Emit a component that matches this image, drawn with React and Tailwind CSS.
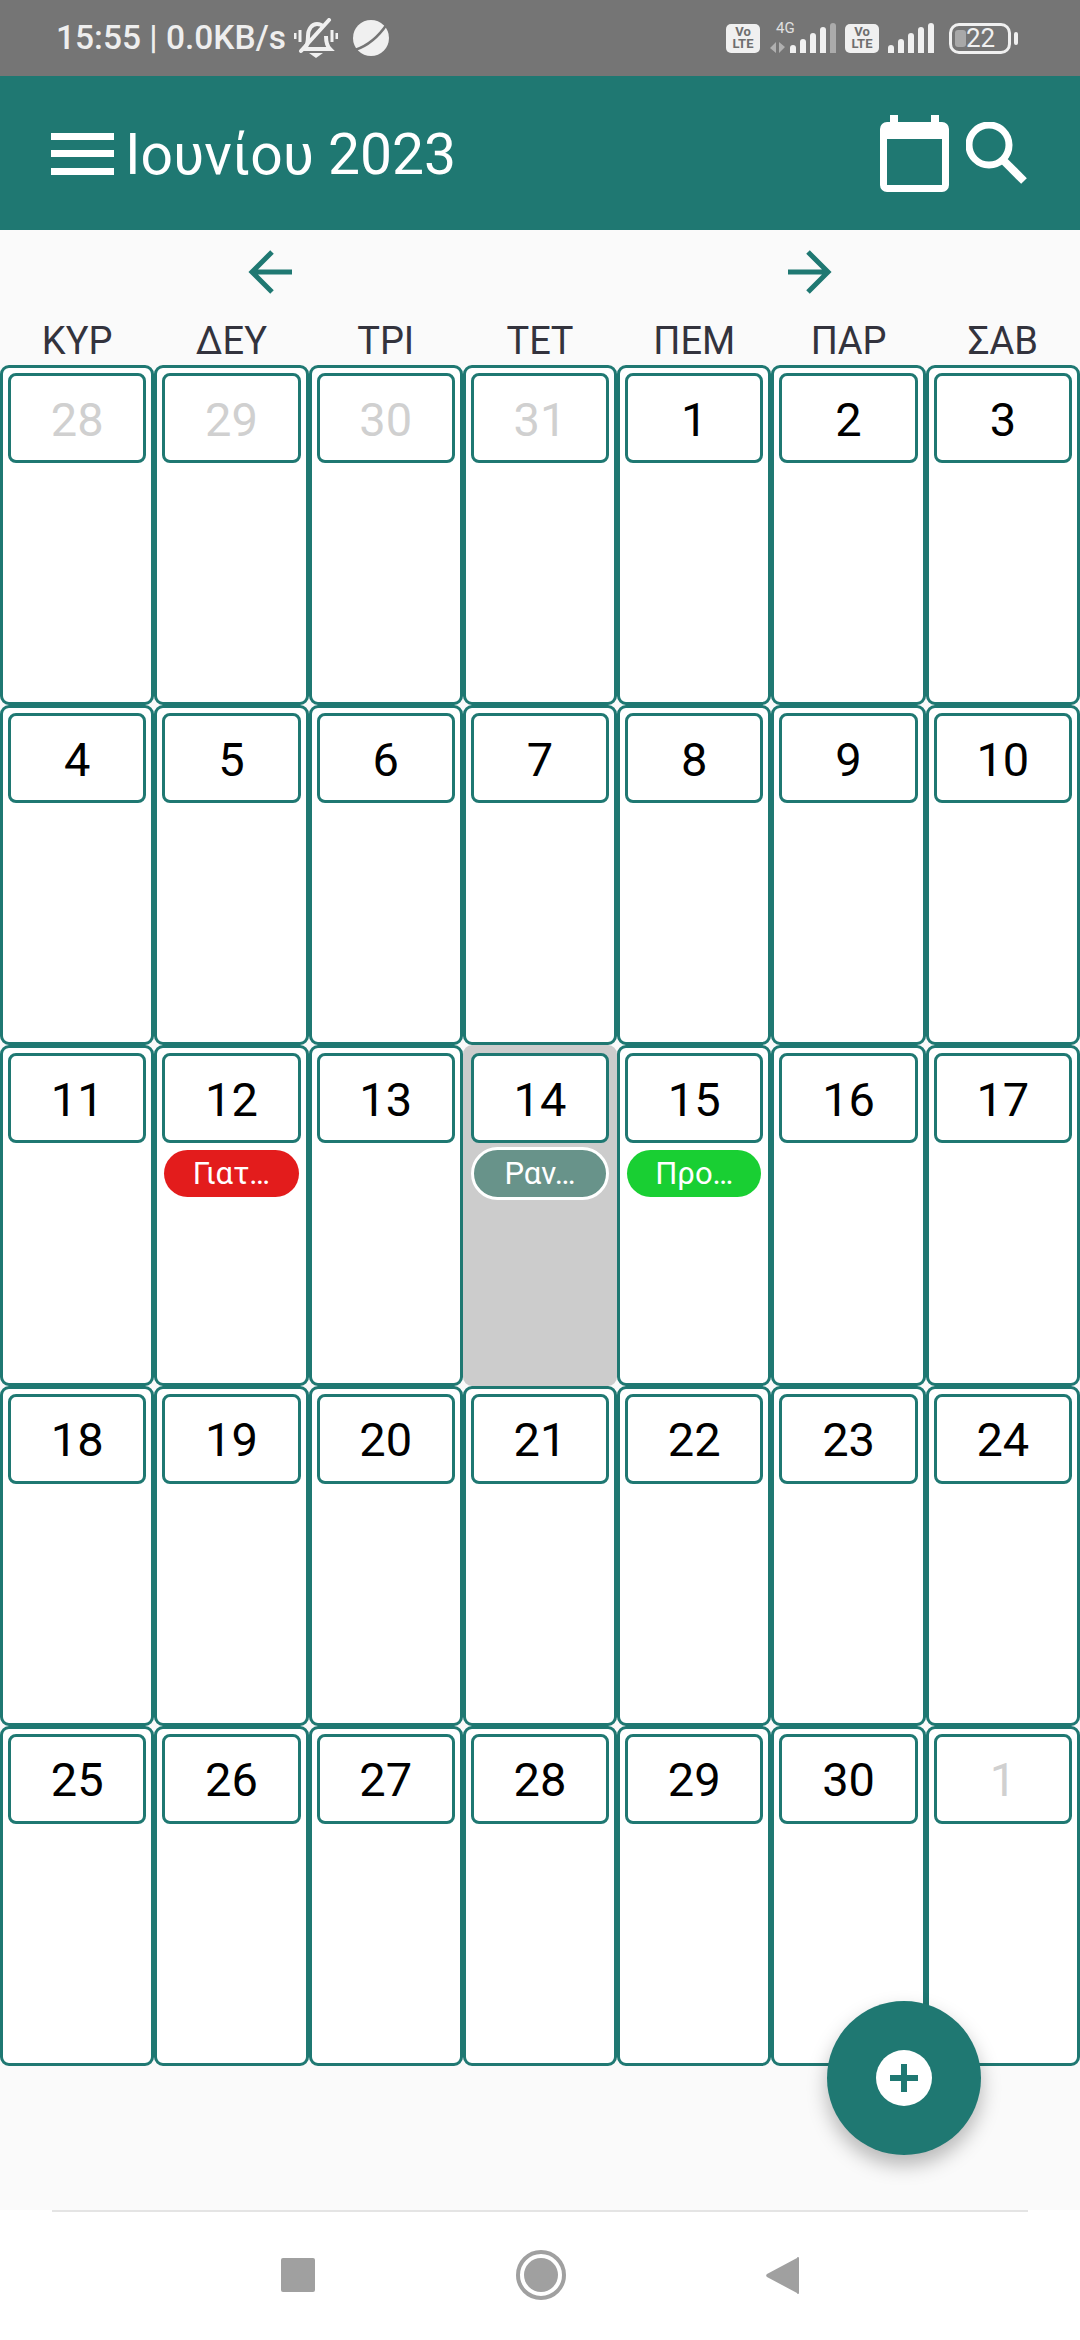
const font = { fontFamily: 'Roboto, sans-serif' }

const days = ['ΚΥΡ', 'ΔΕΥ', 'ΤΡΙ', 'ΤΕΤ', 'ΠΕΜ', 'ΠΑΡ', 'ΣΑΒ']

const cells = [
  ...[28, 29, 30, 31].map((d) => ({ d, muted: true })),
  ...Array.from({ length: 30 }, (_, i) => ({ d: i + 1 })),
  { d: 1, muted: true },
]

function VolteBadge() {
  return (
    <div className="w-[34px] h-[29px] rounded-[5px] bg-[#f0f0f0] flex flex-col items-center justify-center text-[#6e6e6e] text-[13px] leading-[12px] font-bold">
      <span>Vo</span>
      <span>LTE</span>
    </div>
  )
}

function SignalBars({ dimLast }) {
  const heights = [8, 14, 20, 26, 30]
  return (
    <div className="flex items-end gap-[4px] h-[30px]">
      {heights.map((h, i) => (
        <div
          key={h}
          style={{ height: h }}
          className={`w-[6px] rounded-t-[3px] ${dimLast && i === 4 ? 'bg-[#ababab]' : 'bg-[#f0f0f0]'}`}
        />
      ))}
    </div>
  )
}

function StatusBar() {
  return (
    <div className="h-[76px] bg-[#757575] flex items-center pl-[56px] pr-[69px] shrink-0">
      <span className="text-[33.5px] font-medium text-[#eeeeee] leading-none">15:55 | 0.0KB/s</span>
      {/* muted bell */}
      <svg className="ml-[8px]" width="44" height="40" viewBox="0 0 44 40" fill="none" stroke="#f0f0f0" strokeWidth="4">
        <path d="M10 31c4-3 4-8 4-13 0-7 4-12 9-12 3 0 5 1 7 3M32 18c0 6 1 10 4 13H8" />
        <path d="M7 33 35 2" strokeLinecap="round" />
        <path d="M1 15v6M6 12v12M38 12v12M43 15v6" strokeWidth="3" />
        <path d="M15 35h14l-7 5z" fill="#f0f0f0" stroke="none" />
      </svg>
      {/* planet */}
      <svg className="ml-[15px]" width="36" height="36" viewBox="0 0 36 36">
        <circle cx="18" cy="18" r="18" fill="#f0f0f0" />
        <path d="M2 30 C14 26 26 16 34 4" stroke="#757575" strokeWidth="2.5" fill="none" />
      </svg>
      <div className="ml-auto flex items-center">
        <VolteBadge />
        <div className="relative w-[66px] h-[30px] ml-[10px] flex justify-end">
          <span className="absolute left-[6px] -top-[3px] text-[15px] leading-[16px] text-[#e0e0e0]">4G</span>
          <svg className="absolute left-0 bottom-0" width="16" height="11" viewBox="0 0 16 11" fill="#b0b0b0">
            <path d="M6 0v11L0 6zM9 0l6 5-6 6z" />
          </svg>
          <SignalBars dimLast />
        </div>
        <div className="ml-[9px]">
          <VolteBadge />
        </div>
        <div className="ml-[9px]">
          <SignalBars />
        </div>
        {/* battery */}
        <div className="relative ml-[15px] w-[62px] h-[31px] rounded-[10px] border-[3px] border-[#f0f0f0] flex items-center pl-[3px]">
          <div className="w-[11px] h-[17px] bg-[#a8a8a8] rounded-[3px]" />
          <span className="text-[26px] leading-none text-[#f0f0f0]">22</span>
          <div className="absolute -right-[10px] top-[6px] w-[4px] h-[13px] rounded-[2px] bg-[#f0f0f0]" />
        </div>
      </div>
    </div>
  )
}

function Header() {
  return (
    <div className="h-[154px] bg-[#1f7872] flex items-center pl-[51px] pr-[52px] shrink-0">
      <div className="w-[63px] h-[42px] flex flex-col justify-between mt-[1px]">
        <div className="h-[7px] bg-white" />
        <div className="h-[7px] bg-white" />
        <div className="h-[7px] bg-white" />
      </div>
      <span className="ml-[11px] pt-[3px] text-[57px] text-white leading-none">Ιουνίου 2023</span>
      <svg className="ml-auto" width="69" height="77" viewBox="0 0 69 77" fill="white">
        <path fillRule="evenodd" d="M10 0h8v7h33V0h8v7h3a7 7 0 0 1 7 7v56a7 7 0 0 1-7 7H7a7 7 0 0 1-7-7V14a7 7 0 0 1 7-7h3zM7 24v46h55V24z" />
      </svg>
      <svg className="ml-[17px] -mt-[1px]" width="62" height="62" viewBox="0 0 62 62" fill="none" stroke="white">
        <circle cx="23" cy="23" r="20" strokeWidth="7" />
        <path d="M38 39 58 59" strokeWidth="8" />
      </svg>
    </div>
  )
}

function NavArrows() {
  return (
    <div className="h-[84px] flex items-center shrink-0 pl-[248px]">
      <svg width="44" height="44" viewBox="0 0 44 44" fill="none" stroke="#1f7872" strokeWidth="5">
        <path d="M44 22H4M24 2 4 22l20 20" />
      </svg>
      <svg className="ml-[496px]" width="44" height="44" viewBox="0 0 44 44" fill="none" stroke="#1f7872" strokeWidth="5">
        <path d="M0 22h40M20 2l20 20-20 20" />
      </svg>
    </div>
  )
}

function DayCell({ d, muted }) {
  const isToday = d === 14 && !muted
  return (
    <div className={`rounded-[9px] border-[3px] px-[5px] pt-[5px] ${isToday ? 'bg-[#cccccc] border-[#cccccc]' : 'bg-white border-[#1f7872]'}`}>
      <div className={`h-[90px] rounded-[8px] border-[3px] border-[#1f7872] bg-white flex items-center justify-center pt-[2px] text-[47px] leading-none ${muted ? 'text-[#d0d0d0]' : 'text-black'}`}>
        {d}
      </div>
      {d === 12 && !muted && <EventPill label="Γιατ…" color="bg-[#e31c1c]" />}
      {isToday && <EventPill label="Ραν…" color="bg-[#68938a]" outlined />}
      {d === 15 && !muted && <EventPill label="Προ…" color="bg-[#19cf33]" />}
    </div>
  )
}

function EventPill({ label, color, outlined }) {
  return (
    <div
      className={`${color} text-white text-[31px] leading-none flex items-center justify-center rounded-full ${
        outlined ? 'h-[53px] mt-[4px] border-[3px] border-white' : 'h-[47px] mt-[7px] mx-[2px]'
      }`}
    >
      {label}
    </div>
  )
}

export default function App() {
  return (
    <div className="relative w-[1080px] h-[2340px] bg-[#fafafa] flex flex-col overflow-hidden" style={font}>
      <StatusBar />
      <Header />
      <NavArrows />

      <div className="grid grid-cols-7 h-[51px] items-center pt-[3px] shrink-0">
        {days.map((day) => (
          <div key={day} className="text-center text-[38px] leading-none text-[#33333d]">
            {day}
          </div>
        ))}
      </div>

      <div className="grid grid-cols-7 grid-rows-5 h-[1701px] shrink-0">
        {cells.map((c, i) => (
          <DayCell key={i} d={c.d} muted={c.muted} />
        ))}
      </div>

      {/* add button */}
      <div className="absolute left-[827px] top-[2001px] w-[154px] h-[154px] rounded-full bg-[#1f7872] flex items-center justify-center shadow-[0_10px_20px_rgba(0,0,0,0.28)]">
        <svg width="56" height="56" viewBox="0 0 56 56">
          <circle cx="28" cy="28" r="28" fill="white" />
          <path d="M28 14v28M14 28h28" stroke="#1f7872" strokeWidth="6" />
        </svg>
      </div>

      {/* system nav */}
      <div className="mt-auto h-[130px] bg-white shrink-0 flex flex-col">
        <div className="mx-[52px] h-[2px] bg-[#e4e4e4]" />
        <div className="flex-1 relative flex items-center justify-center pb-[2px]">
          <div className="w-[34px] h-[34px] bg-[#a0a0a0] rounded-[2px]" />
          <svg className="ml-[201px]" width="50" height="50" viewBox="0 0 50 50">
            <circle cx="25" cy="25" r="23" fill="none" stroke="#a0a0a0" strokeWidth="4" />
            <circle cx="25" cy="25" r="17" fill="#a0a0a0" />
          </svg>
          <svg className="ml-[200px]" width="33" height="37" viewBox="0 0 33 37">
            <path d="M33 1v35a1 1 0 0 1-2 0L1 20a2 2 0 0 1 0-3L31 1a1 1 0 0 1 2 0z" fill="#a0a0a0" />
          </svg>
        </div>
      </div>
    </div>
  )
}
